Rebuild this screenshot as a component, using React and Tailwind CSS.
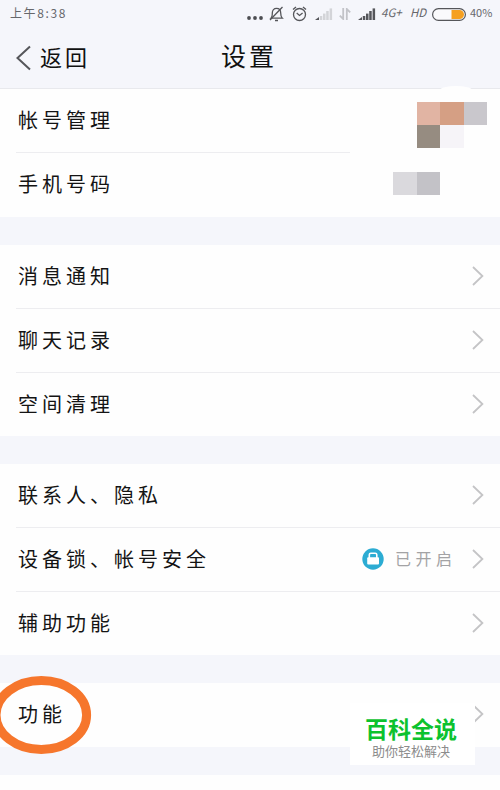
import React from 'react';

const Chevron = () => (
    <svg className="w-3 h-5 shrink-0" viewBox="0 0 12 20" fill="none" stroke="#c4c4c6" strokeWidth="1.8">
        <path d="M1 1 L10.4 10 L1 19" />
    </svg>
);

const Signal = ({ className, faded }) => (
    <svg className={className} viewBox="0 0 18 12">
        <path d="M0 12 L4 9 V12 Z" fill="#55565a" />
        {[[4.8, 8], [8, 5.6], [11.2, 3], [14.6, 0.4]].map(([x, y]) => (
            <rect key={x} x={x} y={y} width="2.5" height={12 - y} fill={faded ? '#d3d4d8' : '#55565a'} />
        ))}
    </svg>
);

const StatusBar = () => (
    <div className="flex items-center h-7 pl-[10px] text-[12px] text-[#66676b]">
        <span className="w-[237px] pb-[2px] tracking-[1.6px] leading-none whitespace-nowrap">上午8:38</span>
        <svg className="w-4 h-[14px] shrink-0" viewBox="0 0 16 14" fill="#4c4d51">
            <circle cx="2" cy="11" r="1.9" />
            <circle cx="8" cy="11" r="1.9" />
            <circle cx="14" cy="11" r="1.9" />
        </svg>
        <svg className="w-[15px] h-4 ml-[6px] shrink-0" viewBox="0 0 15 16" fill="none" stroke="#55565a" strokeWidth="1.3">
            <path d="M2 12.2 C3.5 10.8 3.3 9.5 3.3 7 C3.3 4 5 2.4 7.5 2.4 C10 2.4 11.7 4 11.7 7 C11.7 9.5 11.8 10.8 13.3 12.2 Z" />
            <path d="M6 14.5 H9 M13.5 1 L1 14" />
        </svg>
        <svg className="w-[15px] h-4 ml-2 shrink-0" viewBox="0 0 15 16" fill="none" stroke="#55565a" strokeWidth="1.3">
            <circle cx="7.5" cy="8.5" r="6" />
            <path d="M4.7 7 L7.5 9.4 L10.6 7 M1 3.6 L4 1 M14 3.6 L11 1" />
        </svg>
        <Signal className="w-[18px] h-3 ml-2 shrink-0" faded />
        <svg className="w-3 h-3 ml-[6px] shrink-0" viewBox="0 0 12 12" fill="none" stroke="#c2c3c8" strokeWidth="1.8">
            <path d="M4.2 0 V11 L0.8 7.6 M7.8 12 V1 L11.2 4.4" />
        </svg>
        <Signal className="w-[18px] h-3 ml-[7px] shrink-0" />
        <span className="w-[24px] ml-[5px] pb-[2px] text-[11.5px] italic leading-none">4G+</span>
        <span className="w-[17px] ml-[5px] pb-[2px] text-[11.5px] italic leading-none">HD</span>
        <svg className="w-[34px] h-[13px] ml-[5px] shrink-0" viewBox="0 0 34 13">
            <rect x="0.6" y="0.6" width="32.8" height="11.8" rx="5.9" fill="#fafafc" stroke="#55565a" strokeWidth="1.2" />
            <path d="M19.5 2 H27.5 A4.5 4.5 0 0 1 27.5 11 H19.5 Z" fill="#f5a021" />
        </svg>
        <span className="ml-[4px] pb-[3px] text-[11px] leading-none">40%</span>
    </div>
);

const Header = () => (
    <div className="flex items-center h-[60px] pl-4 text-[#111]">
        <svg className="w-[15px] h-[26px] shrink-0" viewBox="0 0 15 26" fill="none" stroke="#55565a" strokeWidth="2">
            <path d="M14 1.5 L1.5 13 L14 24.5" />
        </svg>
        <span className="w-[181px] ml-[9px] pb-[4px] text-[22px] tracking-[3px] leading-none">返回</span>
        <span className="pb-[5px] text-[25px] tracking-[3px] leading-none">设置</span>
    </div>
);

const Row = ({ label, last, children }) => (
    <div className="flex pl-4">
        <div className={`flex flex-1 items-center pb-px pl-[2px] pr-4 ${last ? 'h-[63px]' : 'h-16 border-b border-[#ededf0]'}`}>
            <span className="flex-1 text-[20px] tracking-[4px] leading-none whitespace-nowrap">{label}</span>
            {children}
        </div>
    </div>
);

const Section = ({ className, children }) => (
    <div className={`bg-[#fefefe] ${className}`}>{children}</div>
);

const App = () => {
    return (
        <div className="w-[500px] h-[790px] overflow-hidden bg-[#f5f6fb] text-[#141414] font-['Noto_Sans_CJK_SC',sans-serif]">
            <div className="relative h-[89px] border-b border-[#e8e9ed]">
                <StatusBar />
                <Header />
                <div className="absolute left-[440px] top-[86px] w-8 h-2 rounded-[50%] bg-[#fefefe]" />
            </div>

            {/* Account */}
            <Section className="h-32">
                <div className="flex h-16 pl-4">
                    <div className="flex items-center w-[334px] pb-px pl-[2px] border-b border-[#ededf0]">
                        <span className="text-[20px] tracking-[4px] leading-none">帐号管理</span>
                    </div>
                    <div className="grid grid-cols-3 w-[70px] h-[46px] ml-[67px] mt-[13px]">
                        <div className="bg-[#e1b4a3]" />
                        <div className="bg-[#d59f84]" />
                        <div className="bg-[#c9c7cc]" />
                        <div className="bg-[#968c81]" />
                        <div className="bg-[#f6f4f8]" />
                    </div>
                </div>
                <div className="flex items-center h-16 pl-[18px] pr-[60px] pb-[3px]">
                    <span className="flex-1 text-[20px] tracking-[4px] leading-none">手机号码</span>
                    <div className="w-[24px] h-[23px] bg-[#dad9dd]" />
                    <div className="w-[23px] h-[23px] bg-[#c3c2c7]" />
                </div>
            </Section>

            {/* Messages */}
            <Section className="mt-7">
                <Row label="消息通知"><Chevron /></Row>
                <Row label="聊天记录"><Chevron /></Row>
                <Row label="空间清理" last><Chevron /></Row>
            </Section>

            {/* Privacy */}
            <Section className="mt-7">
                <Row label="联系人、隐私"><Chevron /></Row>
                <Row label="设备锁、帐号安全">
                    <svg className="w-[22px] h-[22px] shrink-0" viewBox="0 0 22 22">
                        <circle cx="11" cy="11" r="10.7" fill="#2cacd3" />
                        <rect x="5.2" y="9.3" width="11.8" height="7.2" rx="1" fill="#fff" />
                        <path d="M7.3 10 V6.8 Q7.3 5.2 8.9 5.2 H13.2 Q14.8 5.2 14.8 6.8 V10" fill="none" stroke="#fff" strokeWidth="1.6" />
                    </svg>
                    <span className="w-[77px] ml-[11px] pb-[3px] text-[16px] tracking-[4.5px] leading-none text-[#a3a3a5] whitespace-nowrap">已开启</span>
                    <Chevron />
                </Row>
                <Row label="辅助功能" last><Chevron /></Row>
            </Section>

            {/* Features */}
            <Section className="relative mt-7 pb-px">
                <Row label="功能" last><Chevron /></Row>
                <svg className="absolute -left-[9px] -top-[8px] w-[101px] h-[80px]" viewBox="0 0 101 80">
                    <ellipse cx="50.3" cy="40" rx="45.3" ry="34.5" fill="none" stroke="#f6762c" strokeWidth="9" />
                </svg>
                <div className="absolute left-[350px] top-[20px] flex flex-col items-center w-[125px] h-[62px] pt-[15px] pr-[3px] bg-white font-['Liberation_Sans','Noto_Sans_CJK_SC',sans-serif]">
                    <span className="text-[23px] font-bold leading-[24px] text-[#0cc22e] whitespace-nowrap">百科全说</span>
                    <span className="mt-[2px] text-[13px] leading-[16px] text-[#8c8c8c] whitespace-nowrap">助你轻松解决</span>
                </div>
            </Section>

            <Section className="h-5 mt-7" />
        </div>
    );
};

export default App;
